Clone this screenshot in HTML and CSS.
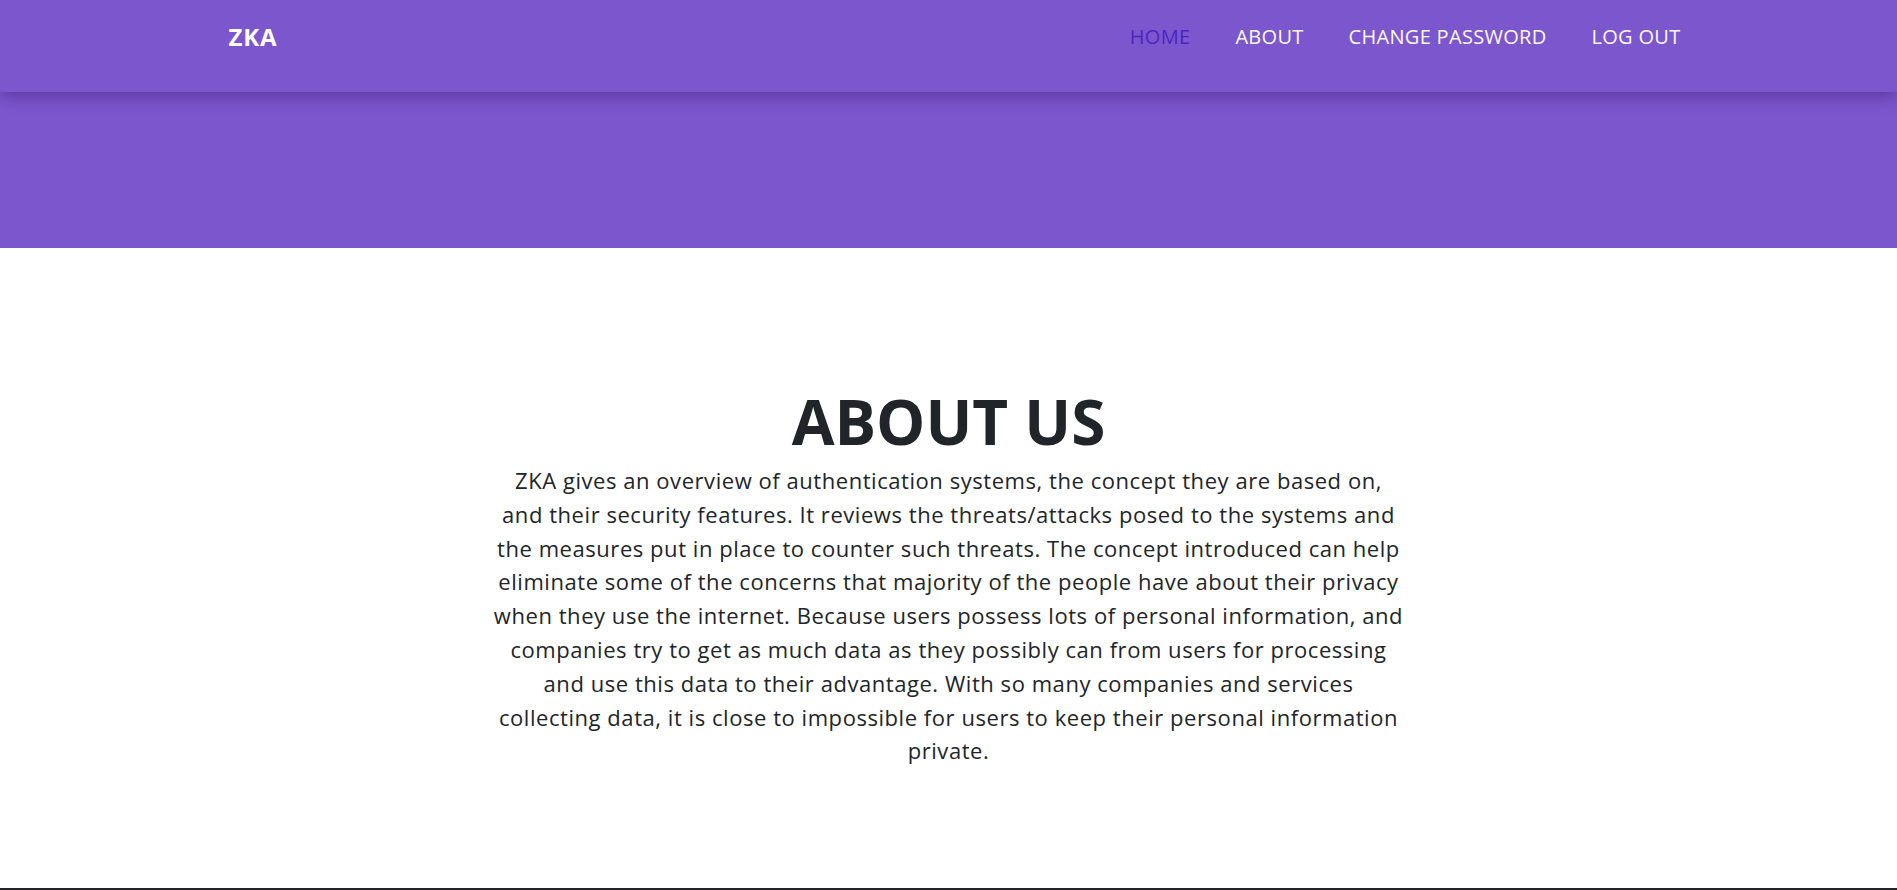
FILE: index.html
```html
<!DOCTYPE html>
<html lang="en">
<head>
<meta charset="utf-8">
<title>ZKA - About</title>
<link rel="stylesheet" href="styles.css">
</head>
<body>
<header class="navbar">
  <div class="nav-inner">
    <a class="brand" href="#">ZKA</a>
    <nav class="nav-links">
      <a class="nav-link active" href="#">HOME</a>
      <a class="nav-link" href="#">ABOUT</a>
      <a class="nav-link" href="#">CHANGE PASSWORD</a>
      <a class="nav-link" href="#">LOG OUT</a>
    </nav>
  </div>
</header>
<section class="hero"></section>
<main class="about">
  <h1 class="about-title">ABOUT US</h1>
  <p class="about-text">ZKA gives an overview of authentication systems, the concept they are based on,<br>
and their security features. It reviews the threats/attacks posed to the systems and<br>
the measures put in place to counter such threats. The concept introduced can help<br>
eliminate some of the concerns that majority of the people have about their privacy<br>
when they use the internet. Because users possess lots of personal information, and<br>
companies try to get as much data as they possibly can from users for processing<br>
and use this data to their advantage. With so many companies and services<br>
collecting data, it is close to impossible for users to keep their personal information<br>
private.</p>
</main>
<footer class="footer"></footer>
</body>
</html>
```

FILE: styles.css
```css
* { box-sizing: border-box; }
html, body { margin: 0; padding: 0; }
body {
  font-family: "Open Sans", "Noto Sans", sans-serif;
  color: #212529;
  background: #fff;
}
.navbar {
  position: relative;
  z-index: 2;
  height: 92px;
  background: #7c56cd;
  box-shadow: 0 5px 14px rgba(40, 10, 90, 0.35);
}
.nav-inner {
  max-width: 1440px;
  margin: 0 auto;
  padding-top: 21px;
  display: flex;
  justify-content: space-between;
  align-items: center;
}
.brand {
  color: #fff;
  font-weight: 700;
  font-size: 24px;
  letter-spacing: 0.8px;
  line-height: 32px;
  text-decoration: none;
}
.nav-links {
  display: flex;
  gap: 45px;
  margin-right: -12px;
}
.nav-link {
  color: #fbf8ff;
  font-size: 20px;
  letter-spacing: 0.3px;
  line-height: 32px;
  text-decoration: none;
}
.nav-link.active { color: #4a25c4; }
.hero {
  height: 156px;
  background: #7c56cd;
}
.about {
  padding: 136px 0 120px;
  text-align: center;
}
.about-title {
  margin: 0 0 6px;
  font-size: 62px;
  line-height: 74px;
  font-weight: 700;
}
.about-text {
  margin: 0;
  font-size: 22px;
  letter-spacing: 0.55px;
  line-height: 33.8px;
}
.footer {
  height: 2px;
  background: #212529;
}
```
